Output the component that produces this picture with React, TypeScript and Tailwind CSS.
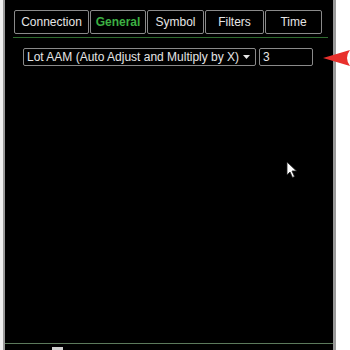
const tabs = ['Connection', 'General', 'Symbol', 'Filters', 'Time'];
const widths = ['w-[75px]', 'w-[56px]', 'w-[57px]', 'w-[59px]', 'w-[57px]'];

export default function App() {
    return (
        <div className="relative flex h-[350px] w-[350px] bg-white font-['Liberation_Sans',Arial,sans-serif] overflow-hidden">
            <div className="w-[3px] bg-[#f0f0f0]" />
            <div className="w-[2px] bg-[#9a9a9a]" />
            {/* panel */}
            <div className="flex w-[328px] flex-col bg-black">
                <div className="flex gap-[1px] pl-[9px] pt-[10px]">
                    {tabs.map((t, i) => (
                        <div
                            key={t}
                            className={`${widths[i]} flex h-[24px] items-center justify-center rounded-[2px] border border-[#8a8a8a] text-[12px] ${t === 'General' ? 'font-bold text-[#3cb043]' : 'text-[#e6e6e6]'}`}
                        >
                            {t}
                        </div>
                    ))}
                </div>
                <div className="ml-[8px] mr-[5px] mt-[3px] h-[1px] bg-[#2f6b2f]" />
                <div className="flex gap-[3px] pl-[18px] pt-[10px]">
                    <div className="flex h-[18px] w-[233px] items-center justify-between whitespace-nowrap rounded-[2px] border border-[#8a8a8a] pl-[3px] pr-[5px] text-[12px] text-[#e6e6e6]">
                        <span>Lot AAM (Auto Adjust and Multiply by X)</span>
                        <svg width="7" height="4" viewBox="0 0 7 4">
                            <path d="M0 0 L7 0 L3.5 4 Z" fill="#e6e6e6" />
                        </svg>
                    </div>
                    <div className="flex h-[18px] w-[54px] items-center rounded-[2px] border border-[#8a8a8a] pl-[3px] text-[12px] text-[#e6e6e6]">
                        3
                    </div>
                </div>
                <div className="flex-1" />
                <div className="mb-[6px] h-[1px] bg-[#5c7a5c]" />
            </div>
            <div className="w-[3px] bg-[#9a9a9a]" />
            <div className="flex-1 bg-white" />

            {/* red arrow */}
            <svg className="absolute left-[323px] top-[48px]" width="27" height="20" viewBox="0 0 27 20">
                <path d="M0 10 L27 2 Q21 10 27 18 Z" fill="#e8302c" />
            </svg>
            {/* mouse cursor */}
            <svg className="absolute left-[286px] top-[161px]" width="12" height="18" viewBox="0 0 12 18">
                <path d="M1 1 L1 14 L4 11 L6.5 16.5 L8.5 15.5 L6 10 L10.5 10 Z" fill="#ffffff" stroke="#222" strokeWidth="0.8" />
            </svg>
            <div className="absolute left-[52px] top-[347px] h-[3px] w-[11px] bg-[#cfcfcf]" />
        </div>
    );
}
